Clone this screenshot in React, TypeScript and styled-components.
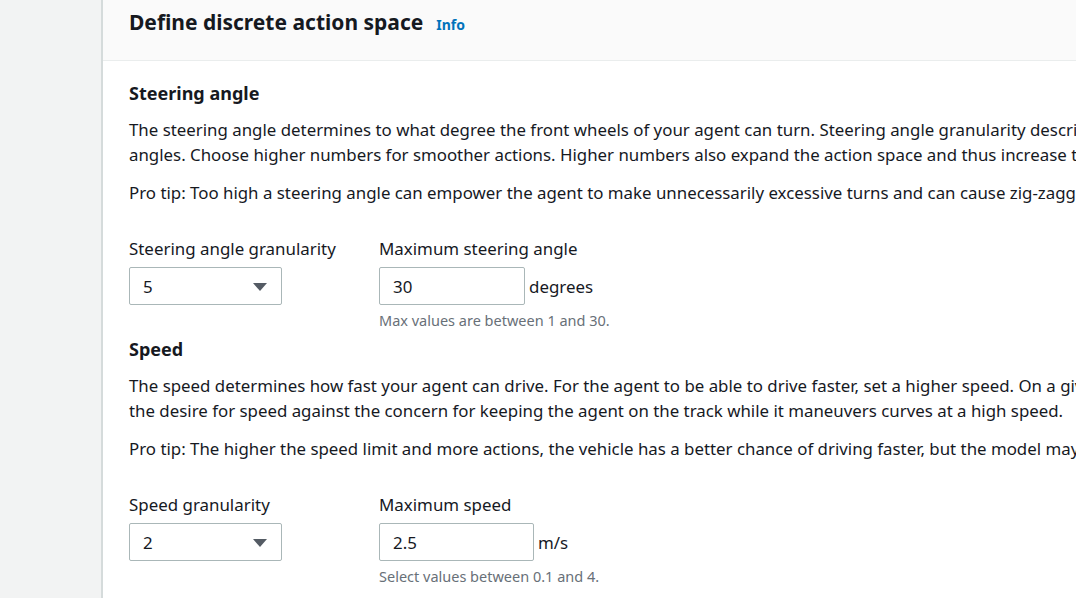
import React from "react";
import styled, { createGlobalStyle } from "styled-components";

const Global = createGlobalStyle`
  html, body { margin: 0; padding: 0; }
  body {
    font-family: "Noto Sans", "Open Sans", Arial, sans-serif;
    color: #16191f;
    background: #f2f3f3;
    overflow: hidden;
  }
`;

const Page = styled.div`
  display: flex;
  width: 1076px;
  height: 598px;
  background: #f2f3f3;
`;

const SideGap = styled.div`
  width: 101px;
  flex: none;
  border-right: 2px solid #d5dbdb;
`;

const Panel = styled.section`
  flex: 1;
  min-width: 0;
  background: #ffffff;
  overflow: hidden;
`;

const PanelHeader = styled.header`
  display: flex;
  align-items: baseline;
  gap: 13px;
  height: 61px;
  box-sizing: border-box;
  padding: 7px 26px 0;
  background: #fafafa;
  border-bottom: 1px solid #eaeded;
  white-space: nowrap;
`;

const Title = styled.h2`
  margin: 0;
  font-size: 21px;
  line-height: 30px;
  font-weight: 700;
  color: #16191f;
`;

const InfoLink = styled.a`
  font-size: 14px;
  font-weight: 700;
  color: #0073bb;
  text-decoration: none;
`;

const Body = styled.div`
  padding: 20px 26px 0;
  white-space: nowrap;
`;

const Block = styled.div`
  display: flex;
  flex-direction: column;
  margin-bottom: 8px;
`;

const SubTitle = styled.h3`
  margin: 0 0 12px;
  font-size: 18px;
  line-height: 24px;
  font-weight: 700;
`;

const Para = styled.p`
  margin: 0 0 13px;
  font-size: 16.85px;
  line-height: 25px;
`;

const Fields = styled.div`
  display: flex;
  margin-top: 18px;
`;

const Field = styled.div<{ $w?: number }>`
  display: flex;
  flex-direction: column;
  width: ${(p) => (p.$w ? `${p.$w}px` : "auto")};
  flex: none;
`;

const Label = styled.label`
  font-size: 16.9px;
  line-height: 25px;
  margin-bottom: 6px;
`;

const Select = styled.div`
  display: flex;
  align-items: center;
  justify-content: space-between;
  box-sizing: border-box;
  width: 153px;
  height: 38px;
  padding: 0 14px 0 13px;
  border: 1px solid #aab7b8;
  border-radius: 2px;
  font-size: 16.9px;
`;

const Row = styled.div`
  display: flex;
  align-items: center;
  gap: 4px;
`;

const Input = styled.div<{ $w: number }>`
  display: flex;
  align-items: center;
  box-sizing: border-box;
  width: ${(p) => p.$w}px;
  height: 38px;
  padding: 0 13px;
  border: 1px solid #aab7b8;
  border-radius: 2px;
  font-size: 16.9px;
`;

const Unit = styled.span`
  font-size: 16.9px;
`;

const Hint = styled.div`
  margin-top: 6px;
  font-size: 14.5px;
  line-height: 18px;
  color: #687078;
`;

const Caret = () => (
  <svg width="14" height="9" viewBox="0 0 14 9">
    <polygon points="0,1 14,1 7,9" fill="#545b64" />
  </svg>
);

type SectionProps = {
  title: string;
  lines: string[];
  tip: string;
  selLabel: string;
  selValue: string;
  inLabel: string;
  inValue: string;
  inWidth: number;
  unit: string;
  hint: string;
};

const Section = (p: SectionProps) => (
  <Block>
    <SubTitle>{p.title}</SubTitle>
    <Para>
      {p.lines[0]}
      <br />
      {p.lines[1]}
    </Para>
    <Para>{p.tip}</Para>
    <Fields>
      <Field $w={250}>
        <Label>{p.selLabel}</Label>
        <Select>
          <span>{p.selValue}</span>
          <Caret />
        </Select>
      </Field>
      <Field>
        <Label>{p.inLabel}</Label>
        <Row>
          <Input $w={p.inWidth}>{p.inValue}</Input>
          <Unit>{p.unit}</Unit>
        </Row>
        <Hint>{p.hint}</Hint>
      </Field>
    </Fields>
  </Block>
);

export default function App() {
  return (
    <Page>
      <Global />
      <SideGap />
      <Panel>
        <PanelHeader>
          <Title>Define discrete action space</Title>
          <InfoLink href="#">Info</InfoLink>
        </PanelHeader>
        <Body>
          <Section
            title="Steering angle"
            lines={[
              "The steering angle determines to what degree the front wheels of your agent can turn. Steering angle granularity describes how many discrete steering angles are available",
              "angles. Choose higher numbers for smoother actions. Higher numbers also expand the action space and thus increase training time.",
            ]}
            tip="Pro tip: Too high a steering angle can empower the agent to make unnecessarily excessive turns and can cause zig-zagging behavior."
            selLabel="Steering angle granularity"
            selValue="5"
            inLabel="Maximum steering angle"
            inValue="30"
            inWidth={146}
            unit="degrees"
            hint="Max values are between 1 and 30."
          />
          <Section
            title="Speed"
            lines={[
              "The speed determines how fast your agent can drive. For the agent to be able to drive faster, set a higher speed. On a given track, you need to balance",
              "the desire for speed against the concern for keeping the agent on the track while it maneuvers curves at a high speed.",
            ]}
            tip="Pro tip: The higher the speed limit and more actions, the vehicle has a better chance of driving faster, but the model may take longer to converge."
            selLabel="Speed granularity"
            selValue="2"
            inLabel="Maximum speed"
            inValue="2.5"
            inWidth={155}
            unit="m/s"
            hint="Select values between 0.1 and 4."
          />
        </Body>
      </Panel>
    </Page>
  );
}
